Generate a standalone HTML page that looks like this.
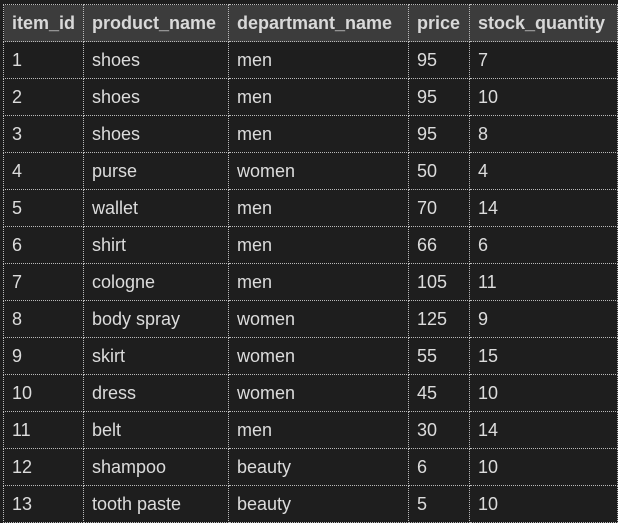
<!DOCTYPE html><html><head><style>
body{margin:0;background:#1e1e1e;width:618px;height:523px;overflow:hidden;font-family:"Liberation Sans",Arial,sans-serif;}
table{position:absolute;left:3px;top:4px;border-collapse:collapse;color:#dcdcdc;font-size:18px;table-layout:fixed;width:614px;}
tr{height:37px;}
td,th{border:1px dotted #bbb;padding:0 0 0 8px;height:37px;line-height:20px;text-align:left;white-space:nowrap;box-sizing:border-box;}
th{background:#3c3c3c;font-weight:bold;color:#d8d8d8;}
</style></head><body>
<table>
<colgroup><col style="width:80px"><col style="width:145px"><col style="width:180px"><col style="width:61px"><col style="width:148px"></colgroup>
<tr><th>item_id</th><th>product_name</th><th>departmant_name</th><th>price</th><th>stock_quantity</th></tr>
<tr><td>1</td><td>shoes</td><td>men</td><td>95</td><td>7</td></tr>
<tr><td>2</td><td>shoes</td><td>men</td><td>95</td><td>10</td></tr>
<tr><td>3</td><td>shoes</td><td>men</td><td>95</td><td>8</td></tr>
<tr><td>4</td><td>purse</td><td>women</td><td>50</td><td>4</td></tr>
<tr><td>5</td><td>wallet</td><td>men</td><td>70</td><td>14</td></tr>
<tr><td>6</td><td>shirt</td><td>men</td><td>66</td><td>6</td></tr>
<tr><td>7</td><td>cologne</td><td>men</td><td>105</td><td>11</td></tr>
<tr><td>8</td><td>body spray</td><td>women</td><td>125</td><td>9</td></tr>
<tr><td>9</td><td>skirt</td><td>women</td><td>55</td><td>15</td></tr>
<tr><td>10</td><td>dress</td><td>women</td><td>45</td><td>10</td></tr>
<tr><td>11</td><td>belt</td><td>men</td><td>30</td><td>14</td></tr>
<tr><td>12</td><td>shampoo</td><td>beauty</td><td>6</td><td>10</td></tr>
<tr><td>13</td><td>tooth paste</td><td>beauty</td><td>5</td><td>10</td></tr>
</table></body></html>
